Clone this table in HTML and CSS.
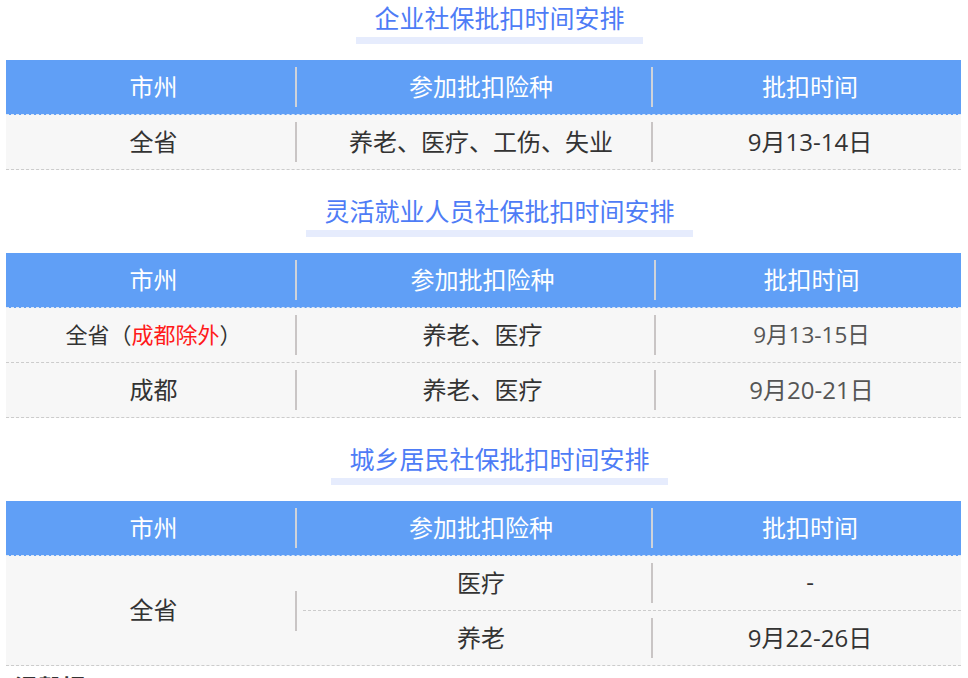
FILE: index.html
```html
<!DOCTYPE html>
<html lang="zh-CN">
<head>
<meta charset="utf-8">
<title>社保批扣时间安排</title>
<link rel="stylesheet" href="styles.css">
</head>
<body>
<div class="page">
  <div class="title first"><span class="title-text">企业社保批扣时间安排</span></div>
  <div class="table t1">
    <div class="row head">
      <div class="cell c1">市州</div>
      <div class="cell c2">参加批扣险种</div>
      <div class="cell c3">批扣时间</div>
    </div>
    <div class="row">
      <div class="cell c1">全省</div>
      <div class="cell c2">养老、医疗、工伤、失业</div>
      <div class="cell c3">9月13-14日</div>
    </div>
  </div>

  <div class="title"><span class="title-text">灵活就业人员社保批扣时间安排</span></div>
  <div class="table t2">
    <div class="row head">
      <div class="cell c1">市州</div>
      <div class="cell c2">参加批扣险种</div>
      <div class="cell c3">批扣时间</div>
    </div>
    <div class="row">
      <div class="cell c1 small">全省（<span class="red">成都除外</span>）</div>
      <div class="cell c2">养老、医疗</div>
      <div class="cell c3 grey small-date">9月13-15日</div>
    </div>
    <div class="row">
      <div class="cell c1">成都</div>
      <div class="cell c2">养老、医疗</div>
      <div class="cell c3 grey">9月20-21日</div>
    </div>
  </div>

  <div class="title"><span class="title-text">城乡居民社保批扣时间安排</span></div>
  <div class="table t3">
    <div class="row head">
      <div class="cell c1">市州</div>
      <div class="cell c2">参加批扣险种</div>
      <div class="cell c3">批扣时间</div>
    </div>
    <div class="span-row">
      <div class="span-name">全省</div>
      <div class="vsep"></div>
      <div class="subrows">
        <div class="subrow">
          <div class="cell s2">医疗</div>
          <div class="cell s3">-</div>
        </div>
        <div class="subrow">
          <div class="cell s2">养老</div>
          <div class="cell s3">9月22-26日</div>
        </div>
      </div>
    </div>
  </div>

  <div class="tips">温馨提示</div>
</div>
</body>
</html>
```

FILE: styles.css
```css
html, body {
  margin: 0;
  padding: 0;
  background: #ffffff;
}

body {
  font-family: "Open Sans", "Noto Sans CJK SC", "Noto Sans", sans-serif;
  color: #333333;
}

.page {
  width: 955px;
  padding: 0 7px 0 6px;
}

.title {
  margin-top: 23px;
  margin-bottom: 16px;
  padding-left: 32px;
  text-align: center;
}

.title.first {
  margin-top: 0;
}

.title-text {
  display: inline-block;
  font-size: 25px;
  line-height: 36px;
  color: #4e7cf6;
  padding: 0 18px 1px;
  border-bottom: 7px solid #e6ecfd;
}

.table {
  background: #f7f7f7;
}

.row {
  display: grid;
  grid-template-columns: 289px 356px 1fr;
  border-bottom: 1px dashed #cccccc;
}

.t2 .row {
  grid-template-columns: 289px 359px 1fr;
}

.row.head {
  background: #609ff6;
  color: #ffffff;
  border-bottom: 1px dashed #dfe8f5;
}

.cell {
  box-sizing: border-box;
  height: 40px;
  margin: 7px 0;
  padding-bottom: 4px;
  display: flex;
  align-items: center;
  justify-content: center;
  font-size: 24px;
  white-space: nowrap;
}

.c1 {
  padding-left: 6px;
}

.c2 {
  border-left: 2px solid #c9c5c5;
  padding-left: 14px;
}

.c3 {
  border-left: 2px solid #c9c5c5;
  padding-left: 6px;
}

.head .c2,
.head .c3 {
  border-left-color: #cfd3da;
}

.small {
  font-size: 22px;
}

.small-date {
  font-size: 22.5px;
}

.grey {
  color: #555555;
}

.red {
  color: #ff1a1a;
}

.span-row {
  display: flex;
  border-bottom: 1px dashed #cccccc;
}

.span-name {
  width: 283px;
  padding-left: 6px;
  padding-bottom: 4px;
  display: flex;
  align-items: center;
  justify-content: center;
  font-size: 24px;
}

.vsep {
  width: 2px;
  height: 40px;
  align-self: center;
  background: #c9c5c5;
}

.subrows {
  flex: 1;
  margin-left: 6px;
}

.subrow {
  display: grid;
  grid-template-columns: 348px 1fr;
}

.subrow + .subrow {
  border-top: 1px dashed #cccccc;
}

.s2 {
  padding-left: 8px;
}

.s3 {
  border-left: 2px solid #c9c5c5;
  padding-left: 6px;
}

.tips {
  margin-top: 4px;
  padding-left: 8px;
  font-size: 24px;
  line-height: 36px;
  font-weight: bold;
  color: #333333;
}
```
